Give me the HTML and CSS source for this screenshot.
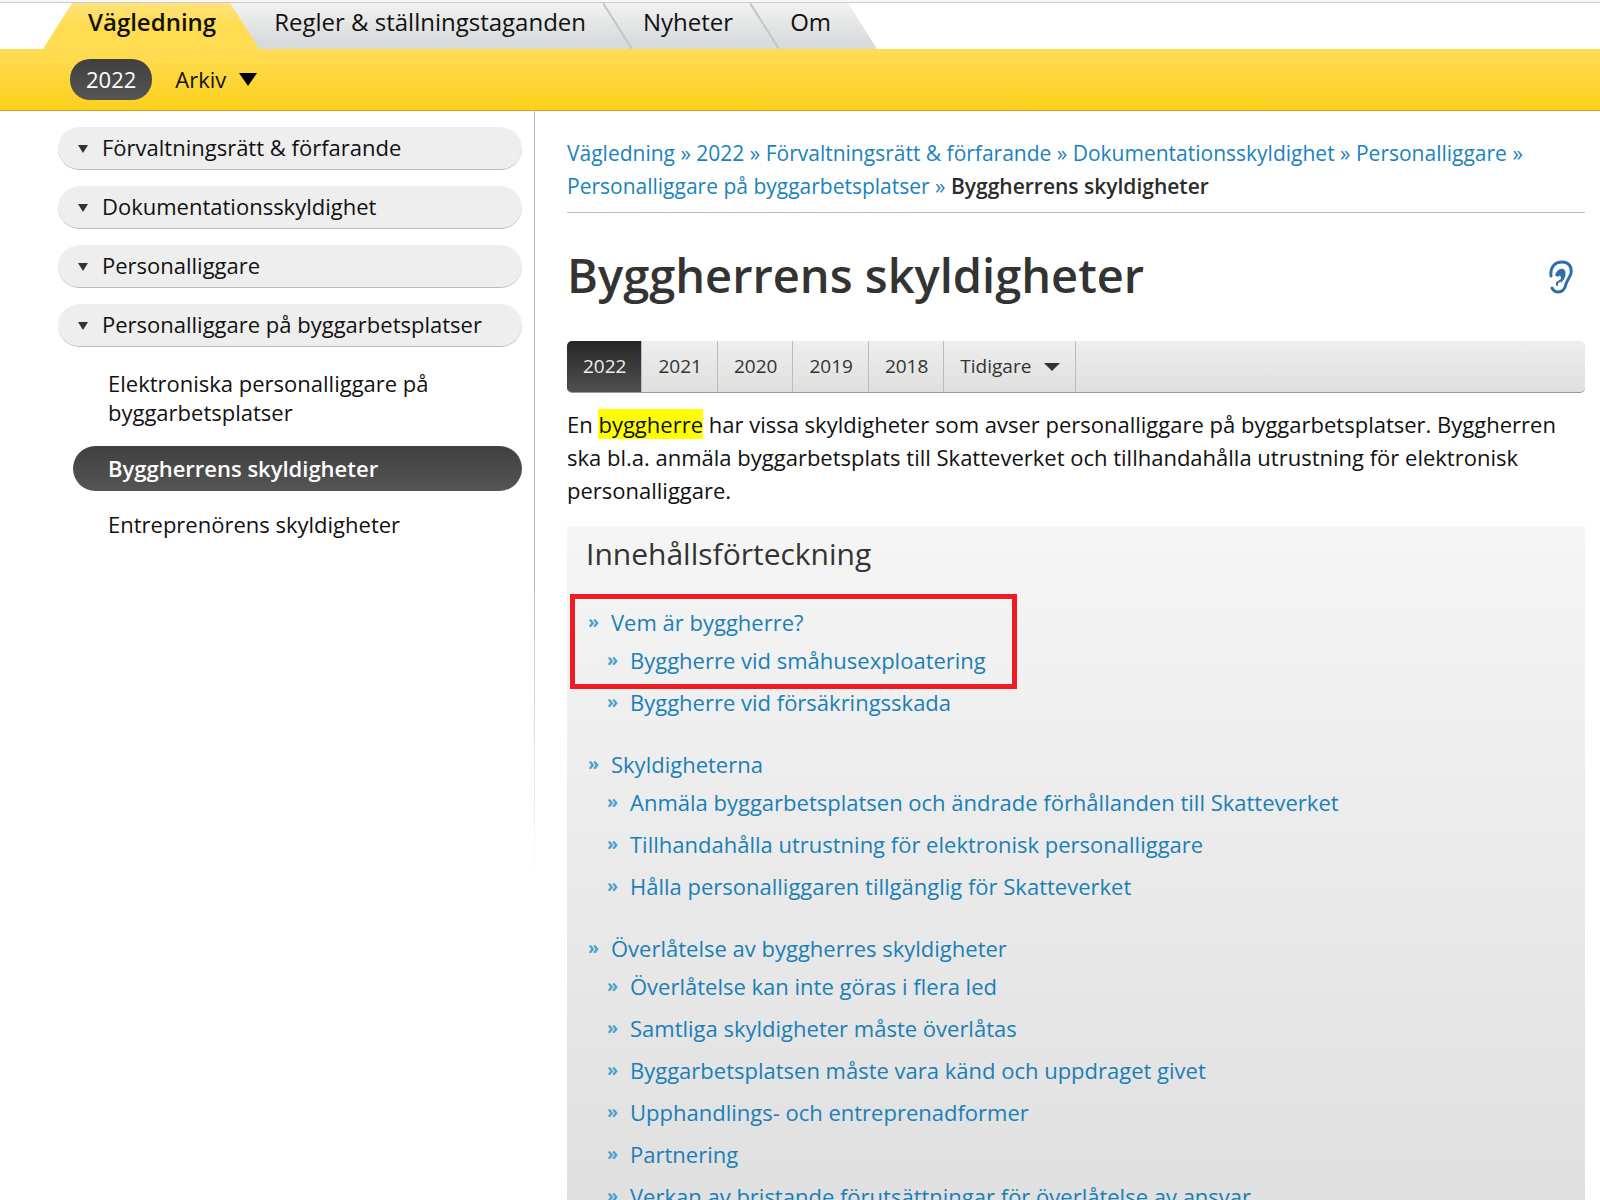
FILE: index.html
```html
<!DOCTYPE html>
<html lang="sv">
<head>
<meta charset="utf-8">
<meta name="viewport" content="width=device-width, initial-scale=1">
<title>Byggherrens skyldigheter</title>
<link rel="stylesheet" href="styles.css">
</head>
<body>
<div class="page">
  <header>
    <nav class="tabs" aria-label="Huvudmeny">
      <a class="tab-active" href="#">Vägledning</a>
      <div class="tab-group">
        <a class="tab" href="#">Regler &amp; ställningstaganden</a>
        <svg class="slash" viewBox="0 0 29 46" aria-hidden="true"><path d="M0 0L29 46"/></svg>
        <a class="tab" href="#">Nyheter</a>
        <svg class="slash" viewBox="0 0 29 46" aria-hidden="true"><path d="M0 0L29 46"/></svg>
        <a class="tab" href="#">Om</a>
      </div>
    </nav>
    <div class="band">
      <a class="year-pill" href="#">2022</a>
      <button class="archive" type="button">Arkiv
        <svg class="archive-arrow" viewBox="0 0 18 13" aria-hidden="true"><path d="M0 0H18L9 13Z"/></svg>
      </button>
    </div>
  </header>
  <div class="columns">
    <nav class="sidebar" aria-label="Undermeny">
      <a class="section" href="#"><svg class="section-arrow" viewBox="0 0 10 8" aria-hidden="true"><path d="M0 0H10L5 8Z"/></svg>Förvaltningsrätt &amp; förfarande</a>
      <a class="section" href="#"><svg class="section-arrow" viewBox="0 0 10 8" aria-hidden="true"><path d="M0 0H10L5 8Z"/></svg>Dokumentationsskyldighet</a>
      <a class="section" href="#"><svg class="section-arrow" viewBox="0 0 10 8" aria-hidden="true"><path d="M0 0H10L5 8Z"/></svg>Personalliggare</a>
      <a class="section" href="#"><svg class="section-arrow" viewBox="0 0 10 8" aria-hidden="true"><path d="M0 0H10L5 8Z"/></svg>Personalliggare på byggarbetsplatser</a>
      <div class="subsections">
        <a class="sub" href="#">Elektroniska personalliggare på byggarbetsplatser</a>
        <a class="sub sub-active" href="#">Byggherrens skyldigheter</a>
        <a class="sub" href="#">Entreprenörens skyldigheter</a>
      </div>
    </nav>
    <div class="divider"></div>
    <main class="content">
      <nav class="breadcrumb" aria-label="Brödsmulor">
        <a href="#">Vägledning</a> » <a href="#">2022</a> » <a href="#">Förvaltningsrätt &amp; förfarande</a> » <a href="#">Dokumentationsskyldighet</a> » <a href="#">Personalliggare</a> » <br><a href="#">Personalliggare på byggarbetsplatser</a> » <strong>Byggherrens skyldigheter</strong>
      </nav>
      <div class="title-row">
        <h1>Byggherrens skyldigheter</h1>
        <a class="listen" href="#" aria-label="Lyssna">
          <svg viewBox="0 0 24 34" aria-hidden="true">
            <path class="ear-line" d="M2 16C1 7 6 2 13 2C20 2 23 7 22 13C21 18 18 20 17 24C16 29 13 32 9 32C6 32 4 30 3 28"/>
            <path class="ear-fill" d="M6 15C8 10 11 8 14 9C17 10 17 14 16 17C15 20 13 22 11 23C13 20 12 18 11 15C10 17 8 17 6 15Z"/>
            <path class="ear-thin" d="M12 20L8 23L8 25"/>
          </svg>
        </a>
      </div>
      <nav class="years" aria-label="Årgång">
        <a class="year year-active" href="#">2022</a>
        <a class="year" href="#">2021</a>
        <a class="year" href="#">2020</a>
        <a class="year" href="#">2019</a>
        <a class="year" href="#">2018</a>
        <button class="year earlier" type="button">Tidigare
          <svg class="earlier-arrow" viewBox="0 0 16 8" aria-hidden="true"><path d="M0 0H16L8 8Z"/></svg>
        </button>
      </nav>
      <p class="intro">En <mark>byggherre</mark> har vissa skyldigheter som avser personalliggare på byggarbetsplatser. Byggherren ska bl.a. anmäla byggarbetsplats till Skatteverket och tillhandahålla utrustning för elektronisk personalliggare.</p>
      <section class="toc">
        <h2>Innehållsförteckning</h2>
        <ul class="toc-list">
          <li class="marked"><a href="#">Vem är byggherre?</a>
            <ul>
              <li><a href="#">Byggherre vid småhusexploatering</a></li>
              <li><a href="#">Byggherre vid försäkringsskada</a></li>
            </ul>
            <div class="frame"></div>
          </li>
          <li><a href="#">Skyldigheterna</a>
            <ul>
              <li><a href="#">Anmäla byggarbetsplatsen och ändrade förhållanden till Skatteverket</a></li>
              <li><a href="#">Tillhandahålla utrustning för elektronisk personalliggare</a></li>
              <li><a href="#">Hålla personalliggaren tillgänglig för Skatteverket</a></li>
            </ul>
          </li>
          <li><a href="#">Överlåtelse av byggherres skyldigheter</a>
            <ul>
              <li><a href="#">Överlåtelse kan inte göras i flera led</a></li>
              <li><a href="#">Samtliga skyldigheter måste överlåtas</a></li>
              <li><a href="#">Byggarbetsplatsen måste vara känd och uppdraget givet</a></li>
              <li><a href="#">Upphandlings- och entreprenadformer</a></li>
              <li><a href="#">Partnering</a></li>
              <li><a href="#">Verkan av bristande förutsättningar för överlåtelse av ansvar</a></li>
            </ul>
          </li>
        </ul>
      </section>
    </main>
  </div>
</div>
</body>
</html>
```
FILE: styles.css
```css
* { box-sizing: border-box; }

body {
  margin: 0;
  background: #fff;
  color: #111;
  font: 22px/33px "Open Sans", "Noto Sans", sans-serif;
}

a { color: inherit; text-decoration: none; }
button { border: 0; background: none; font: inherit; color: inherit; cursor: pointer; }
svg { display: block; flex: none; }
ul { list-style: none; margin: 0; padding: 0; }

.page { height: 100vh; overflow: hidden; border-top: 2px solid #f7f7f7; }

/* Main tabs */
.tabs {
  display: flex;
  height: 47px;
  padding-left: 43px;
  border-top: 1px solid #ccc;
  font-size: 24px;
  line-height: 38px;
}
.tab-active {
  z-index: 1;
  margin-right: -29px;
  padding: 0 43px 0 45px;
  background: linear-gradient(#ffe27c, #ffdc50 50%);
  color: #111;
  font-weight: 600;
  clip-path: polygon(29px 0, calc(100% - 29px) 0, 100% 100%, 0 100%);
}
.tab-group {
  display: flex;
  padding: 0 46px 0 33px;
  background: linear-gradient(#f2f2f1, #d8dbdc 85%);
  clip-path: polygon(0 0, calc(100% - 29px) 0, 100% 100%, 0 100%);
}
.tab { padding-left: 11px; }
.slash { width: 29px; height: 46px; margin-left: 17px; }
.slash path { stroke: #c4c6c6; stroke-width: 2; }

/* Yellow band */
.band {
  display: flex;
  align-items: center;
  gap: 23px;
  height: 62px;
  padding: 0 70px;
  border-bottom: 1px solid #d0a526;
  background: linear-gradient(#ffdc56, #fcd01c);
}
.year-pill {
  padding: 0 16px;
  border-radius: 20px;
  background: linear-gradient(#404040, #555);
  color: #fff;
  line-height: 41px;
}
.archive { display: flex; align-items: center; gap: 13px; padding: 0; }
.archive-arrow { width: 18px; height: 13px; }

/* Columns */
.columns { display: grid; grid-template-columns: 534px 2px minmax(0, 1fr); }
.divider { height: 770px; background: linear-gradient(#bbb 60%, #fff); width: 1px; }

.sidebar { display: flex; flex-direction: column; gap: 16px; padding: 16px 12px 0 58px; }
.section {
  display: flex;
  align-items: center;
  gap: 14px;
  height: 43px;
  padding: 0 0 2px 20px;
  border-bottom: 1px solid #bbb;
  border-radius: 22px;
  background: #eee;
}
.section-arrow { width: 10px; height: 8px; margin-top: 4px; fill: #333; }
.subsections { display: flex; flex-direction: column; gap: 11px; margin-top: -2px; padding-left: 15px; }
.sub { padding: 8px 35px; border-radius: 23px; line-height: 29px; }
.sub-active { background: linear-gradient(#404040, #555); color: #fff; font-weight: 600; }

/* Article */
.content { padding: 26px 15px 0 31px; }
.breadcrumb { padding-bottom: 9px; border-bottom: 1px solid #bbb; color: #1a82bd; font-size: 21px; }
.breadcrumb strong { color: #2b2b2b; font-weight: 600; }

.title-row { display: flex; align-items: center; justify-content: space-between; padding: 32px 12px 32px 0; }
h1 { margin: 0; color: #333; font-size: 47px; font-weight: 600; line-height: 60px; padding-bottom: 4px; }
.listen svg { width: 24px; height: 34px; fill: none; }
.ear-line { stroke: #2f6cab; stroke-width: 3; stroke-linecap: round; }
.ear-fill { fill: #2f6cab; }
.ear-thin { stroke: #2f6cab; stroke-width: 2; stroke-linecap: round; }

.years {
  display: flex;
  height: 52px;
  border-bottom: 1px solid #999;
  border-radius: 5px;
  background: linear-gradient(#eee, #e0dfde);
  color: #333;
  font-size: 19px;
  line-height: 51px;
  overflow: hidden;
}
.year { padding: 0 15px 0 16px; border-right: 1px solid #bbb; }
.year-active { background: linear-gradient(#262626, #505050); color: #eee; }
.earlier { display: flex; align-items: center; gap: 13px; }
.earlier-arrow { width: 16px; height: 8px; fill: #333; }

.intro { margin: 15px 0 19px; }
mark { background: #ff0; color: inherit; }

.toc { padding: 8px 19px 60px; background: linear-gradient(#f5f5f5, #dfdfdf 700px); }
h2 { margin: 0 0 32px; color: #333; font-size: 30px; font-weight: 400; line-height: 40px; }
.toc-list { display: flex; flex-direction: column; gap: 29px; padding-left: 2px; }
.toc-list a { color: #1a7fb8; }
.toc-list li::before { content: "»"; float: left; width: 23px; color: #4a9fcb; font-size: 18px; font-weight: 700; line-height: 31px; }
.toc-list ul { display: flex; flex-direction: column; gap: 9px; padding: 5px 0 0 19px; }

/* Highlight frame around the first entries */
.marked { position: relative; }
.frame {
  position: absolute;
  top: -12px;
  left: -18px;
  width: 447px;
  height: 95px;
  border: 5px solid #ee1c25;
  pointer-events: none;
}
```
